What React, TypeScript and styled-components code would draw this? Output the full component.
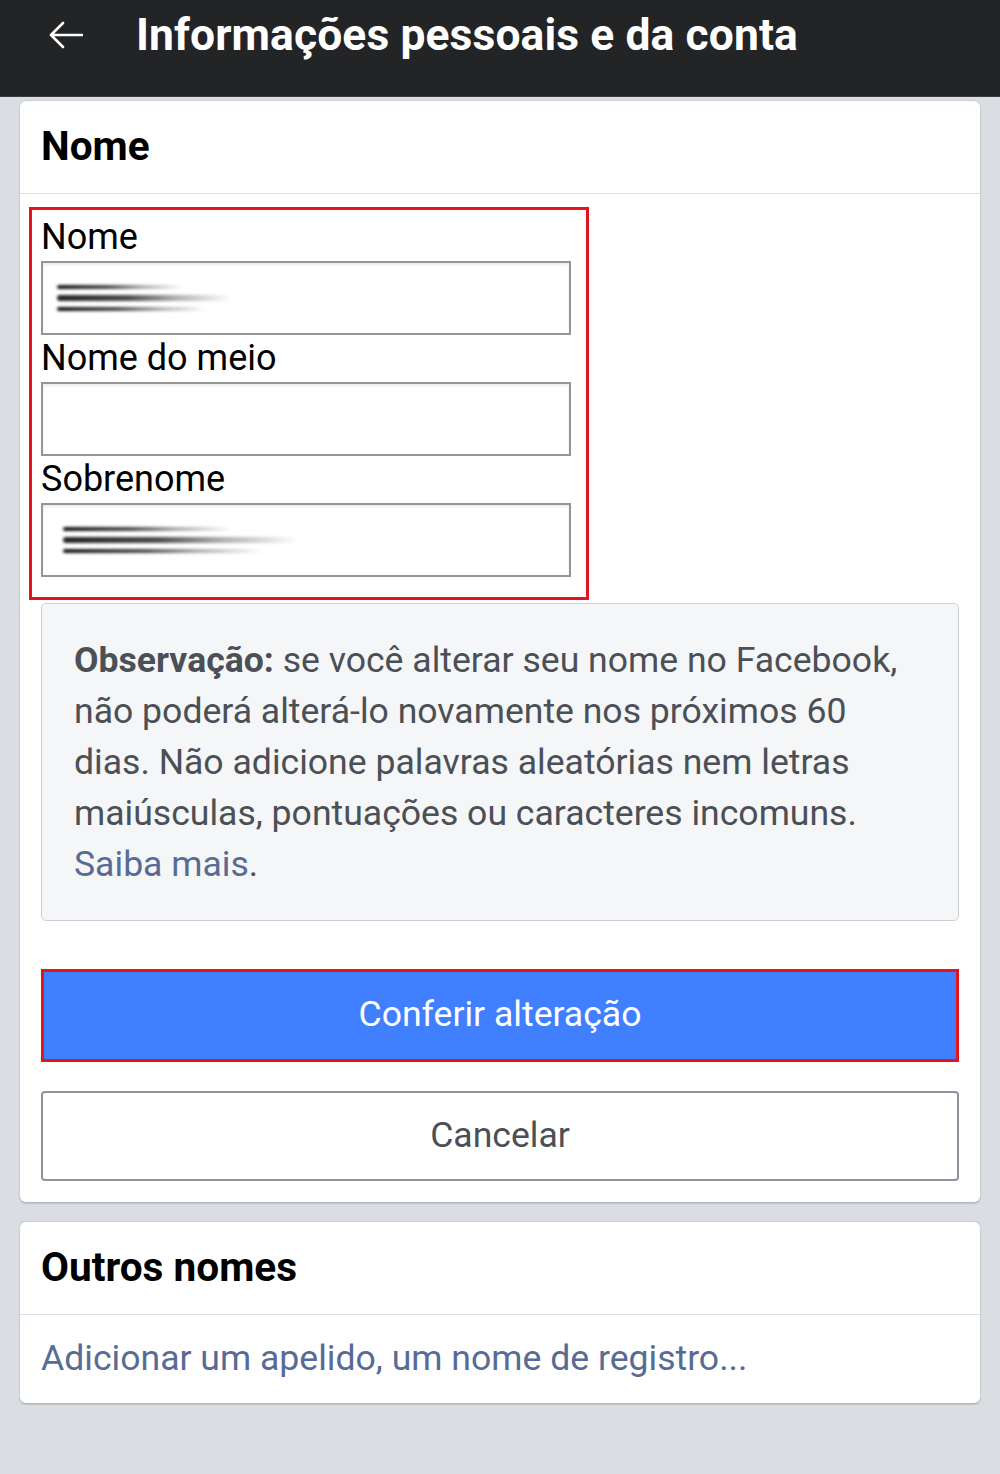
import React from "react";
import styled, { createGlobalStyle } from "styled-components";

const Global = createGlobalStyle`
  html, body { margin: 0; padding: 0; background: #dadde1; }
  body { font-family: Roboto, "Noto Sans", "Liberation Sans", sans-serif; }
  * { box-sizing: border-box; }
`;

const Page = styled.div`
  width: 1000px;
  min-height: 1474px;
  background: #dadde1;
  display: flex;
  flex-direction: column;
`;

const TopBar = styled.header`
  height: 97px;
  background: #232426;
  border-bottom: 1px solid #3a3b3d;
  display: flex;
  align-items: center;
  padding: 0 0 26px 48px;
  gap: 52px;
`;

const BackButton = styled.button`
  width: 36px;
  height: 36px;
  padding: 0;
  border: 0;
  background: transparent;
  display: flex;
  align-items: center;
  justify-content: center;
`;

const Title = styled.h1`
  margin: 0;
  color: #ffffff;
  font-size: 44.4px;
  font-weight: 700;
  letter-spacing: 0.1px;
`;

const Content = styled.main`
  display: flex;
  flex-direction: column;
  gap: 18px;
  padding: 3px 19px 0;
`;

const Card = styled.section`
  background: #ffffff;
  border: 1px solid #ccd0d5;
  border-bottom-color: #b4b8bd;
  border-radius: 7px;
  box-shadow: 0 1px 1px rgba(0, 0, 0, 0.12);
`;

const CardHeader = styled.h2`
  margin: 0;
  height: 93px;
  display: flex;
  align-items: center;
  padding: 0 21px 3px;
  font-size: 40.6px;
  font-weight: 700;
  color: #000000;
  border-bottom: 1px solid #dddfe2;
`;

const CardBody = styled.div`
  display: flex;
  flex-direction: column;
  padding: 13px 21px 21px;
`;

const Highlight = styled.div`
  width: 560px;
  margin-left: -12px;
  border: 3px solid #e3141e;
  padding: 6px 15px 20px 9px;
  display: flex;
  flex-direction: column;
`;

const Field = styled.label`
  display: flex;
  flex-direction: column;
  & + & { margin-top: 2px; }
`;

const FieldLabel = styled.span`
  font-size: 36px;
  line-height: 42px;
  color: #000000;
  margin-bottom: 3px;
`;

const InputBox = styled.div<{ $indent?: number }>`
  height: 74px;
  border: 2px solid #959595;
  background: #ffffff;
  box-shadow: inset 0 2px 3px rgba(0, 0, 0, 0.08);
  display: flex;
  align-items: center;
  padding-left: ${(p) => p.$indent ?? 10}px;
`;

const Smudge = styled.div<{ $w: number; $h: number }>`
  width: ${(p) => p.$w}px;
  height: ${(p) => p.$h}px;
  display: flex;
  flex-direction: column;
  justify-content: space-between;
  filter: blur(1.6px);
`;

const Streak = styled.div<{ $w: number; $t: number; $dark: string }>`
  width: ${(p) => p.$w}%;
  height: ${(p) => p.$t}px;
  border-radius: ${(p) => p.$t}px;
  background: linear-gradient(to right, ${(p) => p.$dark} 0%, #4a4a4a 40%, rgba(110,110,110,0.55) 68%, rgba(255,255,255,0) 100%);
`;

const Note = styled.div`
  margin-top: 3px;
  background: #f5f6f7;
  border: 1px solid #ccd0d5;
  border-radius: 5px;
  padding: 31px 48px 30px 32px;
  font-size: 35.6px;
  line-height: 51px;
  color: #4b4f56;
`;

const Strong = styled.strong`
  font-weight: 700;
`;

const Link = styled.a`
  color: #576b95;
  text-decoration: none;
`;

const Button = styled.button<{ $primary?: boolean }>`
  width: 100%;
  font-family: inherit;
  font-size: 35.6px;
  display: flex;
  align-items: center;
  justify-content: center;
  padding: 0 0 3px;
  ${(p) =>
    p.$primary
      ? `
    margin-top: 48px;
    height: 93px;
    background: #4080ff;
    color: #ffffff;
    border: 3px solid #e3141e;
    border-radius: 0;
  `
      : `
    margin-top: 29px;
    height: 90px;
    background: #ffffff;
    color: #4b4f56;
    border: 2px solid #8d949e;
    border-radius: 4px;
  `}
`;

const LinkRow = styled.div`
  height: 88px;
  display: flex;
  align-items: center;
  padding: 0 21px 2px;
  font-size: 35.6px;
`;

function BlurName({ width, height }: { width: number; height: number }) {
  return (
    <Smudge $w={width} $h={height}>
      <Streak $w={72} $t={4} $dark="#111" />
      <Streak $w={100} $t={6} $dark="#222" />
      <Streak $w={85} $t={4} $dark="#111" />
    </Smudge>
  );
}

export default function App() {
  return (
    <Page>
      <Global />
      <TopBar>
        <BackButton aria-label="Voltar">
          <svg width="34" height="28" viewBox="0 0 34 28" fill="none">
            <path d="M2 14 H33 M14 2 L2 14 L14 26" stroke="#ffffff" strokeWidth="2.6" strokeLinecap="round" strokeLinejoin="round" />
          </svg>
        </BackButton>
        <Title>Informações pessoais e da conta</Title>
      </TopBar>
      <Content>
        <Card>
          <CardHeader>Nome</CardHeader>
          <CardBody>
            <Highlight>
              <Field>
                <FieldLabel>Nome</FieldLabel>
                <InputBox $indent={14}>
                  <BlurName width={175} height={26} />
                </InputBox>
              </Field>
              <Field>
                <FieldLabel>Nome do meio</FieldLabel>
                <InputBox />
              </Field>
              <Field>
                <FieldLabel>Sobrenome</FieldLabel>
                <InputBox $indent={20}>
                  <BlurName width={235} height={26} />
                </InputBox>
              </Field>
            </Highlight>
            <Note>
              <Strong>Observação:</Strong> se você alterar seu nome no Facebook, não poderá alterá-lo novamente nos próximos 60 dias. Não adicione palavras aleatórias nem letras maiúsculas, pontuações ou caracteres incomuns. <Link href="#">Saiba mais</Link>.
            </Note>
            <Button $primary>Conferir alteração</Button>
            <Button>Cancelar</Button>
          </CardBody>
        </Card>
        <Card>
          <CardHeader>Outros nomes</CardHeader>
          <LinkRow>
            <Link href="#">Adicionar um apelido, um nome de registro...</Link>
          </LinkRow>
        </Card>
      </Content>
    </Page>
  );
}
